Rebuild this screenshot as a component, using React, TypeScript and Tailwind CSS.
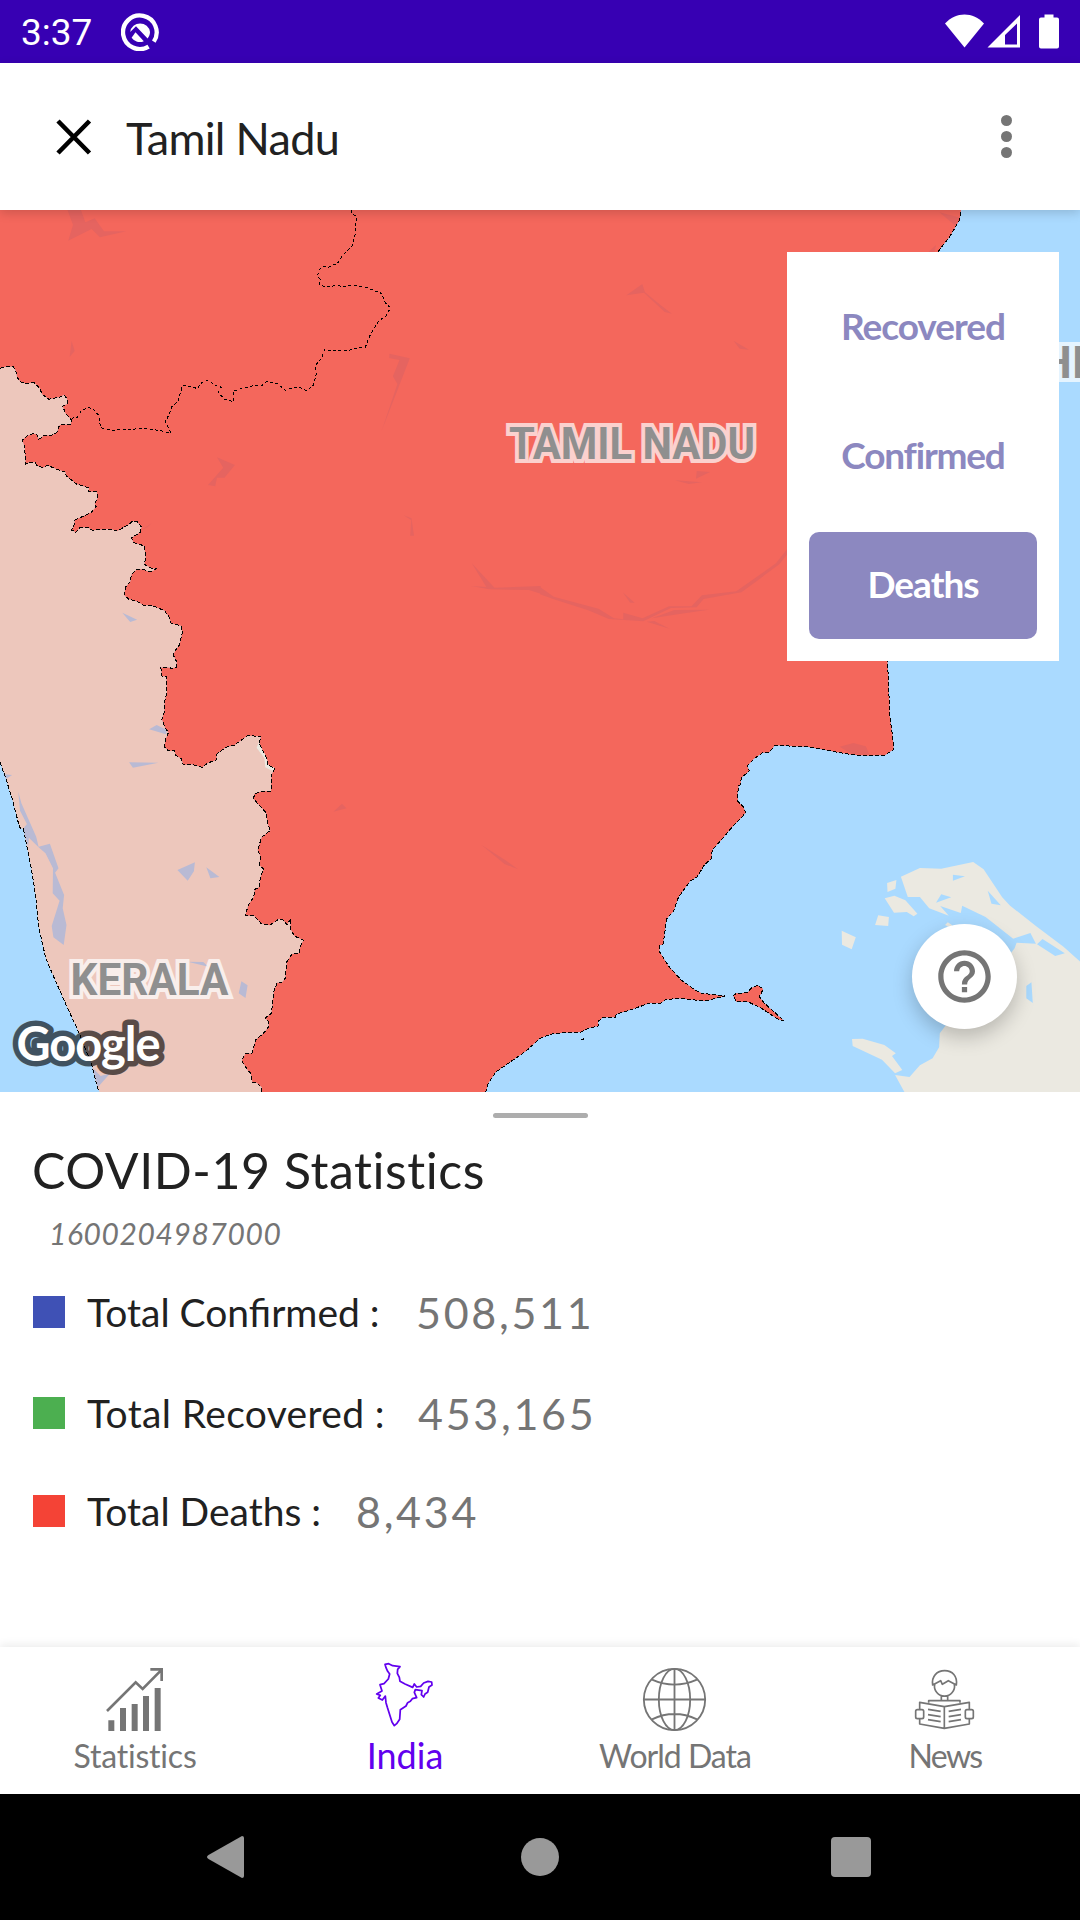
import React from "react";

type Pt = [number, number];

const TILE = { nw: [0, 205], ne: [540, 205], sw: [0, 650], se: [540, 650] } as const;

// Converts tile-local vertices ("x,y x,y ...") to map coordinates.
function tile(name: keyof typeof TILE, data: string): Pt[] {
  const [ox, oy] = TILE[name];
  return data
    .trim()
    .split(/\s+/)
    .map((p) => {
      const [x, y] = p.split(",").map(Number);
      return [ox + x / 2.9037, oy + y / 3] as Pt;
    });
}

const line = (pts: Pt[]) => "M" + pts.map(([x, y]) => `${x.toFixed(1)} ${y.toFixed(1)}`).join("L");
const area = (pts: Pt[]) => line(pts) + "Z";

const northBorder = tile(
  "nw",
  "1020,15 1022,28 1035,32 1033,60 1032,85 1028,100 1023,122 1008,138 995,150 985,168 978,178 965,180 955,187 940,184 930,190 924,205 922,215 930,222 927,238 945,246 975,242 1000,244 1020,241 1060,246 1090,258 1103,260 1112,275 1120,295 1134,308 1122,332 1100,348 1085,372 1070,400 1067,413 1060,427 1030,430 1015,436 965,438 942,433 935,458 925,470 917,480 918,510 910,540 892,558 870,547 850,548 828,556 805,535 773,530 762,541 735,542 700,551 677,558 677,590 652,583 634,562 643,547 625,541 605,526 586,532 573,551 560,546 530,541 522,570 517,590 500,603 490,630 480,650 496,684 470,678 428,671 355,673 325,676 292,668 286,630 272,614 258,607 236,617 225,636 208,640"
);

const westBorder = [
  ...tile(
    "nw",
    "0,490 15,485 38,485 46,497 50,518 62,533 80,535 98,532 116,550 122,568 142,583 175,576 186,569 195,583 195,597 182,603 190,625 208,645 205,658 173,660 165,683 148,692 130,690 113,703 106,688 95,686 78,693 65,705 72,728 74,777 85,772 102,772 108,782 125,788 138,781 165,793 190,801 192,812 222,837 258,849 258,860 281,860 284,878 275,895 279,905 265,922 217,946 214,965 208,975 220,982 231,968 255,967 268,976 320,972 340,978 372,960 385,948 398,950 411,966 407,982 382,998 388,1013 405,1018 419,1023 423,1060 419,1078 440,1090 453,1091 445,1097 432,1100 415,1093 398,1093 382,1108 378,1130 365,1145 360,1170 373,1182 400,1190 415,1200 443,1202 478,1217 490,1235 497,1255 525,1262 530,1280 521,1320"
  ),
  ...tile(
    "sw",
    "510,0 503,15 513,35 512,52 500,55 483,52 467,53 470,78 483,80 485,125 478,155 477,185 470,208 478,230 489,248 480,270 478,292 490,303 507,302 510,315 527,327 532,345 555,343 587,352 605,338 628,330 630,312 655,292 680,286 718,257 758,259 752,280 762,300 775,325 778,345 798,355 788,375 787,423 760,424 738,432 737,448 773,488 777,520 785,541 760,562 748,600 757,620 752,645 766,657 756,682 752,712 740,718 737,740 721,765 712,797 738,797 758,820 783,826 810,807 822,810 833,824 845,806 842,835 855,858 881,871 872,888 868,910 848,912 833,935 828,985 818,998 805,998 795,1025 788,1090 770,1104 780,1115 780,1130 765,1150 742,1170 733,1209 712,1212 702,1232 720,1262 728,1270 733,1297 745,1298 760,1312 761,1328"
  ),
];

const eastCoast = [
  ...tile("sw", "1410,1328 1418,1300 1440,1266 1480,1237 1528,1203"),
  ...tile(
    "se",
    "0,1165 30,1153 65,1148 120,1146 140,1135 170,1128 168,1115 183,1102 218,1102 222,1092 250,1084 320,1059 350,1060 365,1049 400,1045 480,1053 538,1038 510,1035 470,1030 450,1020 410,990 375,950 347,905 347,886 357,884 362,850 367,807 388,784 402,742 437,692 457,680 475,648 498,625 500,600 522,575 555,535 598,488 590,470 575,455 574,430 577,408 583,402 584,385 608,362 602,348 620,328 645,309 667,306 682,286 740,289 780,291 860,306 905,314 950,317 1003,315 1027,298 1024,260 1016,200 1012,100 1009,33"
  ),
  ...tile("ne", "1009,1200 1155,141 1190,95 1218,45 1223,12"),
];

const keralaCoast = tile(
  "sw",
  "0,337 15,380 35,445 57,533 68,537 78,590 88,640 98,700 106,760 112,830 133,925 160,990 190,1060 230,1150 265,1240 282,1310 290,1328"
);

const island = tile(
  "se",
  "561,1037 570,1030 603,1028 612,1015 632,1006 648,1017 637,1040 650,1058 709,1113 690,1107 640,1073 605,1056 570,1055"
);

const darkWater: Pt[][] = [
  tile("nw", "196,15 235,15 248,52 275,40 302,79 367,79 290,97 266,72 198,107 212,60"),
  tile("nw", "208,407 217,438 202,456"),
  tile("nw", "1131,446 1190,460 1108,678 1154,537 1141,514 1160,465 1130,459"),
  tile("nw", "630,757 682,780 652,818 630,818 625,844 604,840 648,788"),
  tile("nw", "1172,931 1195,940 1202,992 1191,992 1194,945"),
  tile("nw", "1370,1075 1436,1148 1570,1143 1570,1166 1536,1155 1420,1153 1368,1143 1412,1146"),
  tile("nw", "411,975 440,955 430,965"),
  tile("ne", "0,1146 40,1175 170,1211 215,1240 242,1243 242,1223 298,1240 375,1204 440,1204 470,1171 570,1159 685,1075 718,1032 718,1048 695,1078 585,1162 475,1182 455,1207 380,1209 300,1249 200,1242 140,1216 40,1183 0,1168"),
  tile("ne", "325,1240 390,1215 490,1214 400,1228"),
  tile("ne", "310,1250 332,1248 376,1271"),
  tile("ne", "240,1162 275,1193 262,1193"),
  tile("ne", "251,271 297,237 305,262 350,300 383,326 362,321 302,263"),
  tile("ne", "562,407 607,434 580,431"),
  tile("ne", "455,798 494,801 453,821"),
  tile("ne", "392,826 470,832 432,837"),
  tile("ne", "1160,22 1220,38 1206,62"),
  tile("ne", "1150,120 1146,141 1128,141"),
  tile("sw", "968,485 993,461 1006,475"),
  tile("sw", "1398,585 1470,632 1504,658 1465,642"),
  tile("se", "870,290 910,279 946,289 957,314 905,312"),
];

const paleWater: Pt[][] = [
  tile("nw", "355,1223 398,1244 378,1251"),
  tile("sw", "433,238 455,225 485,240 482,253"),
  tile("sw", "375,337 460,338 386,353"),
  tile("sw", "10,373 35,375 17,387"),
  tile("sw", "53,425 62,460 105,560 112,590 145,581 170,655 160,668 186,735 182,775 193,825 185,885 155,862 150,828 173,752 153,730 154,655 132,610 112,592 84,563 82,590 67,537 78,522 58,482"),
  tile("sw", "515,660 566,637 563,664 545,692"),
  tile("sw", "599,652 637,681 611,685"),
  tile("sw", "545,935 590,936 605,950"),
  tile("sw", "701,994 719,1006 713,1044 693,1030"),
  tile("sw", "270,1255 292,1278 320,1270 284,1312"),
];

const lanka: Pt[][] = [
  tile("se", "1048,680 1103,654 1165,656 1258,636 1288,658 1342,742 1365,767 1440,828 1520,890 1570,936 1570,1330 1060,1330 1031,1275 1073,1281 1103,1246 1140,1225 1159,1192 1161,1150 1190,1110 1300,1000 1378,895 1384,878 1440,881 1424,849 1374,866 1294,801 1226,767 1222,789 1162,768 1187,797 1130,775 1103,741 1068,741"),
  tile("se", "1008,699 1035,690 1032,716 1009,726"),
  tile("se", "1001,745 1029,737 1061,751 1096,791 1085,799 1065,786 1028,788"),
  tile("se", "982,796 1013,801 1011,828 973,825"),
  tile("se", "876,842 917,862 905,898 877,884"),
  tile("se", "1176,825 1184,817 1196,825 1196,835"),
  tile("se", "906,1167 937,1166 1000,1185 1033,1210 1022,1218 1052,1260 1031,1270 993,1229 908,1188"),
];

const lankaWater: Pt[][] = [
  tile("se", "1199,674 1234,679 1199,692"),
  tile("se", "1165,733 1194,742 1150,758"),
  tile("se", "1300,722 1338,766 1311,761"),
  tile("se", "1459,867 1524,910 1496,918 1443,883"),
  tile("se", "1412,1008 1427,997 1431,1059 1412,1045"),
];

const stateArea: Pt[] = [[0, 200], ...westBorder, ...eastCoast];
const keralaArea: Pt[] = [...westBorder, ...[...keralaCoast].reverse()];
const forest = tile("sw", "752,275 745,293 768,325 770,352 790,362 799,355 780,345 772,318 758,292");

function MapNames() {
  return (
    <>
      <text x="509" y="459" textLength="246" lengthAdjust="spacingAndGlyphs">TAMIL NADU</text>
      <text x="70.5" y="995" textLength="158" lengthAdjust="spacingAndGlyphs">KERALA</text>
      <text x="1040" y="378">HI</text>
    </>
  );
}

function MapView() {
  return (
    <svg className="block h-full w-full" viewBox="0 210 1080 882">
      <rect y="210" width="1080" height="882" fill="#aadaff" />
      <path d={lanka.map(area).join("")} fill="#ebe9e1" />
      <path d={lankaWater.map(area).join("")} fill="#aadaff" />
      <path d={area(keralaArea)} fill="#edc7bc" />
      <path d={paleWater.map(area).join("")} fill="#b9bad4" />
      <path d={area(stateArea) + area(island)} fill="#f4675c" />
      <path d={darkWater.map(area).join("")} fill="#e56460" />
      <path d={area(forest)} fill="#ebe9e1" />
      <g fill="none" stroke="#000" strokeWidth="1" strokeDasharray="4 2" shapeRendering="crispEdges">
        <path d={line(northBorder)} strokeDasharray="3 2.400" />
        <path d={line(westBorder)} />
        <path d={line(eastCoast)} />
        <path d={line(keralaCoast)} />
        <path d={area(island)} />
        <path d="M581 1039h2v-1" />
      </g>
      <g className="font-['Roboto'] font-bold" fontSize="45">
        <g fill="#fff" stroke="#fff" strokeWidth="8" opacity="0.7" aria-hidden="true">
          <MapNames />
        </g>
        <g fill="#8f8f8f">
          <MapNames />
        </g>
      </g>
      <g className="font-['Lato'] font-bold" fontSize="47">
        <g opacity="0.62" stroke="#000" strokeWidth="11" strokeLinejoin="round" aria-hidden="true">
          <text x="16.5" y="1061" textLength="144">Google</text>
        </g>
        <text x="16.5" y="1061" textLength="144" fill="#fff">Google</text>
      </g>
    </svg>
  );
}

function StatusBar() {
  return (
    <div className="flex h-[63px] items-center justify-between bg-[#3700b3] text-white">
      <div className="flex items-center">
        <span className="ml-[21px] w-[100px] pt-[3px] font-['Roboto'] text-[37px] leading-[60px]">3:37</span>
        <svg width="38" height="38" viewBox="0 0 38 38" fill="none">
          <path d="M27.6 33.6A16.8 16.8 0 1 1 32.8 28.6" stroke="#fff" strokeWidth="4.3" />
          <path d="M9.2 19A10 10 0 0 1 29 19c0 2.6-1 4.700-2.400 6.400L15 13.200z" fill="#fff" />
          <path d="M14.500 19.300 22.800 28.200a10 10 0 0 1-12.200-3.500z" fill="#fff" />
        </svg>
      </div>
      <svg className="mr-[21px]" width="114" height="35" viewBox="0 0 114 35" fill="#fff">
        <path d="M0 9.500C11-2.600 28-2.600 39 9.500L19.500 33.500z" />
        <path fillRule="evenodd" d="M42.500 33.500 75 1v32.500zM60 30.500h12V9.500l-12 11.500z" />
        <path d="M99.500.5h9v3H112a2 2 0 0 1 2 2v27a2 2 0 0 1-2 2H96a2 2 0 0 1-2-2v-27a2 2 0 0 1 2-2h3.500z" />
      </svg>
    </div>
  );
}

function TopBar() {
  return (
    <header className="relative z-10 flex h-[147px] items-center bg-white shadow-[0_3px_10px_rgba(0,0,0,0.16)]">
      <svg className="ml-[56px]" width="36" height="36" viewBox="0 0 36 36" stroke="#000" strokeWidth="4.600">
        <path d="M2 2 33.500 34M33.500 2 2 34" />
      </svg>
      <h1 className="ml-[34px] pt-[2px] font-['Lato'] text-[45px] leading-[60px] tracking-[-0.7px] text-[#212121]">Tamil Nadu</h1>
      <svg className="mr-[67px] ml-auto" width="13" height="44" viewBox="0 0 13 44" fill="#757575">
        <circle cx="6.500" cy="5.500" r="5.500" />
        <circle cx="6.500" cy="21.500" r="5.500" />
        <circle cx="6.500" cy="37.500" r="5.500" />
      </svg>
    </header>
  );
}

function LayerMenu() {
  const base = "flex h-[107px] items-center justify-center rounded-[10px] pb-[3px] font-['Lato'] text-[37px] font-bold";
  return (
    <div className="absolute top-[42px] right-[21px] flex h-[409px] w-[272px] flex-col gap-[22px] bg-white p-[22px]">
      <button className={base + " tracking-[-1px] text-[#8c88c0]"}>Recovered</button>
      <button className={base + " tracking-[-1.2px] text-[#8c88c0]"}>Confirmed</button>
      <button className={base + " bg-[#8c88c0] tracking-[-1px] text-white"}>Deaths</button>
    </div>
  );
}

function StatsSheet() {
  const label = "ml-[22px] font-['Lato'] text-[39px] leading-[32px] whitespace-pre text-[#212121]";
  const value = "font-['Lato'] text-[43px] leading-[33px] tracking-[2.7px] text-[#757575]";
  return (
    <section className="flex h-[555px] flex-col bg-white pl-[33px]">
      <div className="mt-[21px] ml-[460px] h-[5px] w-[95px] rounded-full bg-[#adadad]" />
      <h2 className="mt-[22px] -ml-px font-['Lato'] text-[50px] leading-[61px] tracking-[0.55px] text-[#212121]">COVID-19 Statistics</h2>
      <p className="mt-[14px] ml-[16px] font-['Lato'] text-[30px] leading-[36px] tracking-[0.6px] text-[#757575] italic">1600204987000</p>
      <div className="mt-[45px] flex h-[32px]">
        <div className="size-[32px] bg-[#3f51b5]" />
        <span className={label + " w-[329px]"}>Total Confirmed :</span>
        <span className={value}>508,511</span>
      </div>
      <div className="mt-[69px] flex h-[32px]">
        <div className="size-[32px] bg-[#4caf50]" />
        <span className={label + " w-[331px] tracking-[0.35px]"}>Total Recovered :</span>
        <span className={value}>453,165</span>
      </div>
      <div className="mt-[66px] flex h-[32px]">
        <div className="size-[32px] bg-[#f44336]" />
        <span className={label + " w-[269px]"}>Total Deaths :</span>
        <span className={value}>8,434</span>
      </div>
    </section>
  );
}

function BottomNav() {
  const item = "flex w-[270px] flex-col items-center pt-[5px] font-['Lato'] leading-[40px]";
  return (
    <nav className="relative flex h-[147px] bg-white text-[#757575] shadow-[0_-3px_8px_rgba(0,0,0,0.07)]">
      <div className={item + " text-[32px]"}>
        <svg width="96" height="84" viewBox="81 36 288 252" fill="currentColor">
          <path d="M145 241h18v32h-18zM180 204h18v69h-18zM215 192h18v81h-18zM249 168h18v105h-18zM284 144h18v129h-18z" />
          <path d="M141 213 227 127 248 147 303 91M271 88h34v35" fill="none" stroke="currentColor" strokeWidth="8" />
        </svg>
        <span className="tracking-[-0.2px]">Statistics</span>
      </div>
      <div className={item + " text-[36px] text-[#6200ee]"}>
        <svg className="-mb-px" width="96" height="84" viewBox="891 36 288 252" fill="none" stroke="currentColor" strokeWidth="5.200" strokeLinejoin="round">
          <path d="M975 73 986 71 998 77 1020 80 1013 88 1012 100 1018 112 1020 124 1035 132 1058 142 1063 132 1070 141 1082 139 1091 129 1104 124 1115 126 1116 135 1107 141 1103 157 1095 162 1091 171 1084 164 1086 152 1066 149 1063 157 1070 173 1057 176 1051 184 1043 188 1038 198 1021 209 1019 238 1010 251 1003 257 996 246 982 202 978 188 976 168 967 180 955 174 961 166 950 162 966 153 960 134 972 131 985 117 989 102 983 94 978 83Z" />
        </svg>
        <span>India</span>
      </div>
      <div className={item + " text-[32px]"}>
        <svg width="96" height="84" viewBox="201 36 288 252" fill="none" stroke="currentColor" strokeWidth="5.500">
          <circle cx="343.500" cy="178.500" r="92" />
          <ellipse cx="343.500" cy="178.500" rx="47" ry="92" />
          <path d="M343.500 86v185M251 178.500h185M276 119q67 30 135 0M276 238q67-32 135 0" />
        </svg>
        <span className="tracking-[-1px]">World Data</span>
      </div>
      <div className={item + " text-[32px]"}>
        <svg width="96" height="84" viewBox="1011 36 288 252" fill="none" stroke="currentColor" strokeWidth="5" strokeLinejoin="round">
          <path d="M1124 133a30 30 0 1 0 59 0M1118 135c-4-26 13-43 36-43s39 17 35 43l-24-13-18 11-5-11zM1144 169v12M1163 169v12M1106 188v-6h94v6" />
          <path d="M1079 209v-22l74 13 75-13v22M1079 236v16l74 13 75-13v-16M1153 200v65M1104 208l38 6M1104 224l38 6M1104 239l38 6M1203 208l-37 6M1203 224l-37 6M1203 239l-37 6" />
          <rect x="1067" y="209" width="24" height="27" rx="5" />
          <rect x="1216" y="209" width="24" height="27" rx="5" />
        </svg>
        <span className="tracking-[-1.6px]">News</span>
      </div>
    </nav>
  );
}

function SystemNav() {
  return (
    <div className="flex h-[126px] items-center bg-black">
      <svg className="ml-[206px]" width="38" height="44" viewBox="0 0 38 44" fill="#999">
        <path d="M36 1q2 0 2 2v38q0 2-2 2L2.500 24q-3-2 0-4z" />
      </svg>
      <div className="ml-[277px] size-[38px] rounded-full bg-[#999]" />
      <div className="ml-[272px] size-[40px] rounded-[4px] bg-[#999]" />
    </div>
  );
}

export default function App() {
  return (
    <div className="flex h-[1920px] w-[1080px] flex-col overflow-hidden bg-white">
      <StatusBar />
      <TopBar />
      <main className="relative h-[882px]">
        <MapView />
        <LayerMenu />
        <button className="absolute top-[714px] left-[912px] flex size-[105px] items-center justify-center rounded-full bg-white shadow-[0_8px_20px_rgba(0,0,0,0.22)]">
          <svg width="63" height="63" viewBox="0 0 24 24" fill="#757575">
            <path d="M11 18h2v-2h-2v2zm1-16C6.480 2 2 6.480 2 12s4.480 10 10 10 10-4.480 10-10S17.520 2 12 2zm0 18c-4.410 0-8-3.590-8-8s3.590-8 8-8 8 3.590 8 8-3.590 8-8 8zm0-14c-2.210 0-4 1.790-4 4h2c0-1.100.9-2 2-2s2 .9 2 2c0 2-3 1.750-3 5h2c0-2.250 3-2.500 3-5 0-2.210-1.790-4-4-4z" />
          </svg>
        </button>
      </main>
      <StatsSheet />
      <BottomNav />
      <SystemNav />
    </div>
  );
}
